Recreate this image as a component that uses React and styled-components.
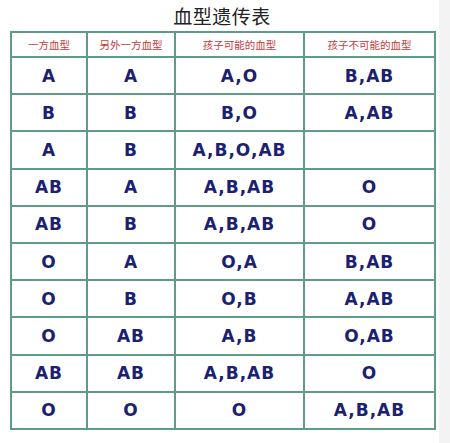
import React from 'react';
import styled, { createGlobalStyle } from 'styled-components';

const rows = [
  ['A', 'A', 'A,O', 'B,AB'],
  ['B', 'B', 'B,O', 'A,AB'],
  ['A', 'B', 'A,B,O,AB', ''],
  ['AB', 'A', 'A,B,AB', 'O'],
  ['AB', 'B', 'A,B,AB', 'O'],
  ['O', 'A', 'O,A', 'B,AB'],
  ['O', 'B', 'O,B', 'A,AB'],
  ['O', 'AB', 'A,B', 'O,AB'],
  ['AB', 'AB', 'A,B,AB', 'O'],
  ['O', 'O', 'O', 'A,B,AB'],
];

const headers = ['一方血型', '另外一方血型', '孩子可能的血型', '孩子不可能的血型'];
const widths = [76, 88, 129, 131];

const App = () => (
  <>
    <GlobalStyle />
    <Page>
      <Main>
        <Title>血型遗传表</Title>
        <Table>
          <colgroup>
            {widths.map((w, i) => (
              <col key={i} style={{ width: w }} />
            ))}
          </colgroup>
          <thead>
            <tr>
              {headers.map((h) => (
                <HeadCell key={h}>{h}</HeadCell>
              ))}
            </tr>
          </thead>
          <tbody>
            {rows.map((r, i) => (
              <tr key={i}>
                {r.map((c, j) => (
                  <Cell key={j}>{c}</Cell>
                ))}
              </tr>
            ))}
          </tbody>
        </Table>
      </Main>
      <Strip />
    </Page>
  </>
);

const GlobalStyle = createGlobalStyle`
  body {
    margin: 0;
    background: #ffffff;
  }
`;

const Page = styled.div`
  display: flex;
  width: 450px;
  height: 443px;
  overflow: hidden;
`;

const Main = styled.div`
  width: 439px;
  padding: 6px 0 0 10px;
  box-sizing: border-box;
`;

const Strip = styled.div`
  width: 11px;
  background: #f3f3f3;
`;

const Title = styled.div`
  width: 424px;
  text-align: center;
  font-family: "Noto Sans CJK SC", sans-serif;
  font-size: 19px;
  line-height: 20px;
  color: #222222;
  height: 25px;
  letter-spacing: 0.5px;
`;

const Table = styled.table`
  border-collapse: collapse;
  table-layout: fixed;
  width: 426px;
  border: 2px solid #5e9c86;
`;

const HeadCell = styled.th`
  border: 2px solid #5e9c86;
  height: 23px;
  padding: 0;
  font-family: "Noto Sans CJK SC", sans-serif;
  font-size: 10.5px;
  font-weight: normal;
  color: #c23a3a;
  text-align: center;
`;

const Cell = styled.td`
  border: 2px solid #5e9c86;
  height: 35.2px;
  padding: 0;
  font-family: "DejaVu Sans", sans-serif;
  font-size: 17px;
  font-weight: bold;
  color: #1c1f72;
  text-align: center;
  letter-spacing: 1px;
`;

export default App;
